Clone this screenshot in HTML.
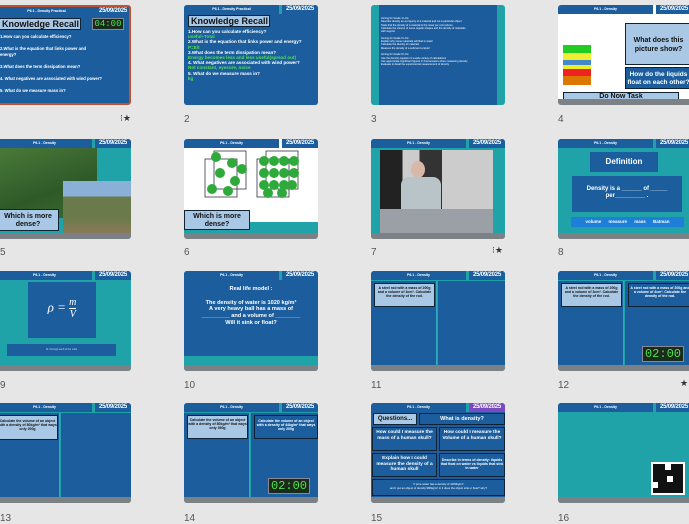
<!DOCTYPE html>
<html><head><meta charset="utf-8"><style>
*{margin:0;padding:0;box-sizing:border-box}
body{width:689px;height:517px;background:#e6e6e6;position:relative;overflow:hidden;font-family:"Liberation Sans",sans-serif}
.s{position:absolute;width:134px;height:100px;background:#1fa3a8;border-radius:3px;overflow:hidden}
.hl{position:absolute;left:0;top:0;width:95px;height:9px;background:#1c5e9d;color:#fff;font-size:3.5px;font-weight:bold;text-align:center;line-height:9px;white-space:nowrap}
.hr{position:absolute;left:98px;top:0;width:36px;height:9px;background:#1c5e9d;color:#fff;font-size:6px;font-weight:bold;text-align:center;line-height:9px;white-space:nowrap;letter-spacing:-0.2px}
.f{position:absolute;left:0;bottom:0;width:100%;height:6px;background:#7c8186;color:#fff;font-size:2.5px;text-align:center;line-height:6px}
.b{position:absolute;background:#1c5e9d}
.lb{position:absolute;background:#a9c8e6;border:1px solid #123;color:#111;font-weight:bold;text-align:center}
.n{position:absolute;font-size:10px;color:#555}
.st{position:absolute;font-size:9px;color:#333;white-space:nowrap}
.w{color:#fff;font-weight:bold}
.g{color:#4ee04e}
.tm{position:absolute;background:#1b2b1b;border:1px solid #889;color:#4ee04e;font-family:"Liberation Mono",monospace;text-align:center}
</style></head><body>

<!-- Row 1 -->
<div class="s" style="left:-3px;top:5px;border:2px solid #c0522f;background:#1c5e9d">
 <div class="hl">P6.1 - Density Practical</div><div class="hr" style="left:96px">25/09/2025</div>
 <div class="lb" style="left:0;top:11px;width:82px;height:12px;font-size:9px;line-height:10px;text-align:left;padding-left:2px">Knowledge Recall</div>
 <div class="tm" style="left:93px;top:11px;width:32px;height:12px;font-size:9px;line-height:10px">04:00</div>
 <div class="w" style="position:absolute;left:1px;top:27px;font-size:4.2px;line-height:6px;width:130px">1.How can you calculate efficiency?<br><br>2.What is the equation that links power and<br>energy?<br><br>3.What does the term dissipation mean?<br><br>4. What negatives are associated with wind power?<br><br>5. What do we measure mass in?</div>
</div>
<div class="st" style="left:120px;top:113px">⁝★</div>

<div class="s" style="left:184px;top:5px">
 <div class="hl">P6.1 - Density Practical</div><div class="hr">25/09/2025</div>
 <div class="b" style="left:0;top:9px;width:134px;height:91px"></div>
 <div class="lb" style="left:4px;top:10px;width:82px;height:12px;font-size:9px;line-height:10px;text-align:left;padding-left:2px">Knowledge Recall</div>
 <div class="w" style="position:absolute;left:4px;top:24px;font-size:4.6px;line-height:5.2px;width:130px">1.How can you calculate efficiency?<br><span class="g">useful÷Total</span><br>2.What is the equation that links power and energy?<br><span class="g">P=E/t</span><br>3.What does the term dissipation mean?<br><span class="g">Energy becomes less and less useful(spread out)</span><br>4. What negatives are associated with wind power?<br><span class="g">Not constant, eyesore, noise</span><br>5. What do we measure mass in?<br><span class="g">kg</span></div>
</div>
<div class="n" style="left:184px;top:114px">2</div>

<div class="s" style="left:371px;top:5px">
 <div class="b" style="left:8px;top:0;width:118px;height:100px;background:#1d5c9c"></div>
 <div style="position:absolute;left:10px;top:12px;width:110px;color:#fff;font-size:2.6px;line-height:3.3px">Aiming for Grade 4 LOs:<br>Describe density as a property of a material and not a particular object<br>State that the density of a material is the mass per unit volume<br>Calculate the volume of some regular shapes and the density of materials<br>with support<br><br>Aiming for Grade 6 LOs:<br>Explain why some materials will float in water<br>Calculate the density of materials<br>Measure the density of a solid and a liquid<br><br>Aiming for Grade 8 LOs:<br>Use the density equation in a wide variety of calculations<br>Use appropriate significant figures in final answers when measuring density<br>Evaluate in detail the experimental measurement of density</div>
</div>
<div class="n" style="left:371px;top:114px">3</div>

<div class="s" style="left:558px;top:5px;background:#fff">
 <div class="hl">P6.1 - Density</div><div class="hr">25/09/2025</div>
 <div style="position:absolute;left:5px;top:40px;width:28px;height:40px;background:linear-gradient(#2c2 0 20%,#ee3 20% 37%,#48c 37% 50%,#ee2 50% 60%,#e22 60% 78%,#d70 78%)"></div>
 <div class="lb" style="left:67px;top:18px;width:67px;height:42px;font-size:7px;line-height:9px;padding-top:12px;background:#a9c8e6">What does this picture show?</div>
 <div class="b" style="left:67px;top:62px;width:67px;height:22px;color:#fff;font-weight:bold;font-size:6.5px;line-height:8px;text-align:center;padding-top:3px;border:1px solid #123">How do the liquids float on each other?</div>
 <div class="lb" style="left:5px;top:87px;width:116px;height:10px;font-size:7px;line-height:8px">Do Now Task</div>
 <div class="f"></div>
</div>
<div class="n" style="left:558px;top:114px">4</div>

<!-- Row 2 -->
<div class="s" style="left:-3px;top:139px">
 <div class="hl">P6.1 - Density</div><div class="hr">25/09/2025</div>
 <div style="position:absolute;left:0;top:9px;width:100px;height:70px;background:linear-gradient(160deg,#4a7a3a,#2e5a28 60%,#3d6a30)"></div>
 <div style="position:absolute;left:66px;top:42px;width:68px;height:52px;background:linear-gradient(#8ab0d8 0 30%,#6a7a4a 30% 70%,#8a7a5a)"></div>
 <div class="lb" style="left:0;top:70px;width:62px;height:22px;font-size:7px;line-height:8px;padding-top:3px">Which is more dense?</div>
 <div class="f"></div>
</div>
<div class="n" style="left:0;top:247px">5</div>

<div class="s" style="left:184px;top:139px;background:#fff">
 <div class="hl">P6.1 - Density</div><div class="hr">25/09/2025</div>
 <svg style="position:absolute;left:18px;top:10px" width="100" height="55"><g fill="none" stroke="#334" stroke-width="0.8"><rect x="3" y="10" width="32" height="38"/><rect x="12" y="2" width="32" height="38"/><rect x="55" y="10" width="32" height="38"/><rect x="64" y="2" width="32" height="38"/></g><g fill="#2eaa3a"><circle cx="14" cy="8" r="5"/><circle cx="30" cy="14" r="5"/><circle cx="18" cy="24" r="5"/><circle cx="33" cy="32" r="5"/><circle cx="10" cy="40" r="5"/><circle cx="26" cy="42" r="5"/><circle cx="40" cy="20" r="5"/><circle cx="62" cy="12" r="5"/><circle cx="72" cy="12" r="5"/><circle cx="82" cy="12" r="5"/><circle cx="92" cy="12" r="5"/><circle cx="62" cy="24" r="5"/><circle cx="72" cy="24" r="5"/><circle cx="82" cy="24" r="5"/><circle cx="92" cy="24" r="5"/><circle cx="62" cy="36" r="5"/><circle cx="72" cy="36" r="5"/><circle cx="82" cy="36" r="5"/><circle cx="90" cy="36" r="5"/><circle cx="66" cy="44" r="5"/><circle cx="80" cy="44" r="5"/></g></svg>
 <div style="position:absolute;left:0;top:83px;width:134px;height:11px;background:#1fa3a8"></div>
 <div class="lb" style="left:0;top:71px;width:66px;height:20px;font-size:7px;line-height:8px;padding-top:2px">Which is more dense?</div>
 <div class="f"></div>
</div>
<div class="n" style="left:184px;top:247px">6</div>

<div class="s" style="left:371px;top:139px">
 <div class="hl">P6.1 - Density</div><div class="hr">25/09/2025</div>
 <div style="position:absolute;left:9px;top:11px;width:113px;height:83px;background:linear-gradient(90deg,#222 0 20%,#ccc 20% 35%,#333 35% 55%,#ccc 55%)"></div>
 <div style="position:absolute;left:30px;top:38px;width:40px;height:45px;background:#b8c4c8;border-radius:8px 8px 0 0"></div>
 <div style="position:absolute;left:40px;top:22px;width:14px;height:17px;background:#d8b8a8;border-radius:50%"></div>
 <div style="position:absolute;left:9px;top:70px;width:113px;height:24px;background:#9aa0a6"></div>
 <div class="f"></div>
</div>
<div class="n" style="left:371px;top:247px">7</div>
<div class="st" style="left:492px;top:245px">⁝★</div>

<div class="s" style="left:558px;top:139px">
 <div class="hl">P6.1 - Density</div><div class="hr">25/09/2025</div>
 <div class="b" style="left:32px;top:13px;width:68px;height:20px;color:#fff;font-weight:bold;font-size:8px;line-height:20px;text-align:center">Definition</div>
 <div class="b" style="left:14px;top:37px;width:110px;height:36px;color:#fff;font-weight:bold;font-size:6px;line-height:7px;text-align:center;padding-top:10px">Density is a ______ of _____<br>per_________ .</div>
 <div style="position:absolute;left:13px;top:78px;width:113px;height:10px;background:#1e7fd8;color:#fff;font-weight:bold;font-size:4.5px;line-height:10px;word-spacing:6px;text-align:center">volume measure mass Batman</div>
 <div class="f"></div>
</div>
<div class="n" style="left:558px;top:247px">8</div>

<!-- Row 3 -->
<div class="s" style="left:-3px;top:271px">
 <div class="hl">P6.1 - Density</div><div class="hr">25/09/2025</div>
 <div class="b" style="left:31px;top:11px;width:68px;height:56px;color:#fff;font-family:'Liberation Serif',serif;font-style:italic;font-size:13px;text-align:center;padding-top:15px">ρ = <span style="display:inline-block;vertical-align:middle;font-size:10px;line-height:11px"><span style="border-bottom:1px solid #fff;display:block">m</span>V</span></div>
 <div class="b" style="left:10px;top:73px;width:109px;height:12px;color:#cde;font-size:2.5px;line-height:12px;text-align:center">St. through each of the units</div>
 <div class="f"></div>
</div>
<div class="n" style="left:0;top:380px">9</div>

<div class="s" style="left:184px;top:271px">
 <div class="hl">P6.1 - Density</div><div class="hr">25/09/2025</div>
 <div class="b" style="left:0;top:9px;width:134px;height:76px;color:#fff;font-weight:bold;font-size:5.6px;line-height:6.8px;text-align:center;padding-top:6px">Real life model :<br><br>The density of water is 1020 kg/m³<br>A very heavy ball has a mass of<br>_________ and a volume of ________<br>Will it sink or float?</div>
 <div class="f"></div>
</div>
<div class="n" style="left:184px;top:380px">10</div>

<div class="s" style="left:371px;top:271px">
 <div class="hl">P6.1 - Density</div><div class="hr">25/09/2025</div>
 <div class="b" style="left:0;top:10px;width:66px;height:84px;border-right:1px solid #3ab"></div>
 <div class="b" style="left:67px;top:10px;width:67px;height:84px"></div>
 <div class="lb" style="left:3px;top:12px;width:61px;height:24px;font-size:3.5px;line-height:4px;padding-top:2px">A steel rod with a mass of 200g and a volume of 3cm³. Calculate the density of the rod.</div>
 <div class="f"></div>
</div>
<div class="n" style="left:371px;top:380px">11</div>

<div class="s" style="left:558px;top:271px">
 <div class="hl">P6.1 - Density</div><div class="hr">25/09/2025</div>
 <div class="b" style="left:0;top:10px;width:66px;height:84px;border-right:1px solid #3ab"></div>
 <div class="b" style="left:67px;top:10px;width:67px;height:84px"></div>
 <div class="lb" style="left:3px;top:12px;width:61px;height:24px;font-size:3.5px;line-height:4px;padding-top:2px">A steel rod with a mass of 200g and a volume of 3cm³. Calculate the density of the rod.</div>
 <div class="b" style="left:70px;top:12px;width:64px;height:24px;border:1px solid #123;color:#fff;font-weight:bold;font-size:3.5px;line-height:4px;text-align:center;padding-top:2px">A steel rod with a mass of 200g and a volume of 4cm³. Calculate the density of the rod.</div>
 <div class="tm" style="left:84px;top:75px;width:42px;height:16px;font-size:12px;line-height:14px">02:00</div>
 <div class="f"></div>
</div>
<div class="n" style="left:558px;top:380px">12</div>
<div class="st" style="left:680px;top:378px">★</div>

<!-- Row 4 -->
<div class="s" style="left:-3px;top:403px">
 <div class="hl">P6.1 - Density</div><div class="hr">25/09/2025</div>
 <div class="b" style="left:0;top:10px;width:63px;height:84px;border-right:1px solid #3ab"></div>
 <div class="b" style="left:64px;top:10px;width:70px;height:84px"></div>
 <div class="lb" style="left:0;top:12px;width:61px;height:25px;font-size:3.5px;line-height:4px;padding-top:3px">Calculate the volume of an object with a density of 80kg/m³ that ways only 200g</div>
 <div class="f"></div>
</div>
<div class="n" style="left:0;top:513px">13</div>

<div class="s" style="left:184px;top:403px">
 <div class="hl">P6.1 - Density</div><div class="hr">25/09/2025</div>
 <div class="b" style="left:0;top:10px;width:66px;height:84px;border-right:1px solid #3ab"></div>
 <div class="b" style="left:67px;top:10px;width:67px;height:84px"></div>
 <div class="lb" style="left:3px;top:12px;width:61px;height:24px;font-size:3.5px;line-height:4px;padding-top:2px">Calculate the volume of an object with a density of 80kg/m³ that ways only 390g</div>
 <div class="b" style="left:70px;top:12px;width:64px;height:24px;border:1px solid #123;color:#fff;font-weight:bold;font-size:3.5px;line-height:4px;text-align:center;padding-top:3px">Calculate the volume of an object with a density of 44kg/m³ that ways only 200g</div>
 <div class="tm" style="left:84px;top:75px;width:42px;height:16px;font-size:12px;line-height:14px">02:00</div>
 <div class="f"></div>
</div>
<div class="n" style="left:184px;top:513px">14</div>

<div class="s" style="left:371px;top:403px">
 <div class="hl">P6.1 - Density</div><div class="hr" style="background:#7a4bc0">25/09/2025</div>
 <div class="b" style="left:0;top:9px;width:134px;height:85px"></div>
 <div class="lb" style="left:2px;top:10px;width:44px;height:12px;font-size:6px;line-height:10px">Questions...</div>
 <div class="b" style="left:48px;top:10px;width:86px;height:12px;border:1px solid #123;color:#fff;font-weight:bold;font-size:5.5px;line-height:10px;text-align:center">What is density?</div>
 <div class="b" style="left:1px;top:24px;width:65px;height:24px;border:1px solid #123;color:#fff;font-weight:bold;font-size:4.8px;line-height:5.5px;text-align:center;padding-top:2px">How could I measure the mass of a human skull?</div>
 <div class="b" style="left:68px;top:24px;width:66px;height:24px;border:1px solid #123;color:#fff;font-weight:bold;font-size:4.8px;line-height:5.5px;text-align:center;padding-top:2px">How could I measure the Volume of a human skull?</div>
 <div class="b" style="left:1px;top:50px;width:65px;height:24px;border:1px solid #123;color:#fff;font-weight:bold;font-size:4.8px;line-height:5.5px;text-align:center;padding-top:2px">Explain how I could measure the density of a human skull</div>
 <div class="b" style="left:68px;top:50px;width:66px;height:24px;border:1px solid #123;color:#fff;font-weight:bold;font-size:3.5px;line-height:4.2px;text-align:center;padding-top:4px">Describe in terms of density: liquids that float on water vs liquids that sink in water</div>
 <div class="b" style="left:1px;top:76px;width:133px;height:17px;border:1px solid #123;color:#fff;font-size:2.8px;line-height:3.5px;text-align:center;padding-top:3px">If pure water has a density of 1000kg/m³<br>and I put an object of density 980kg/m³ in it does the object sink or float? why?</div>
 <div class="f"></div>
</div>
<div class="n" style="left:371px;top:513px">15</div>

<div class="s" style="left:558px;top:403px">
 <div class="hl">P6.1 - Density</div><div class="hr">25/09/2025</div>
 <div style="position:absolute;left:93px;top:59px;width:34px;height:33px;background:#fff;padding:2px"><div style="width:100%;height:100%;background:#111;position:relative"><div style="position:absolute;left:12px;top:0;width:6px;height:6px;background:#fff"></div><div style="position:absolute;left:14px;top:12px;width:6px;height:6px;background:#fff"></div><div style="position:absolute;left:0;top:18px;width:5px;height:6px;background:#fff"></div></div></div>
 <div class="f"></div>
</div>
<div class="n" style="left:558px;top:513px">16</div>

</body></html>
